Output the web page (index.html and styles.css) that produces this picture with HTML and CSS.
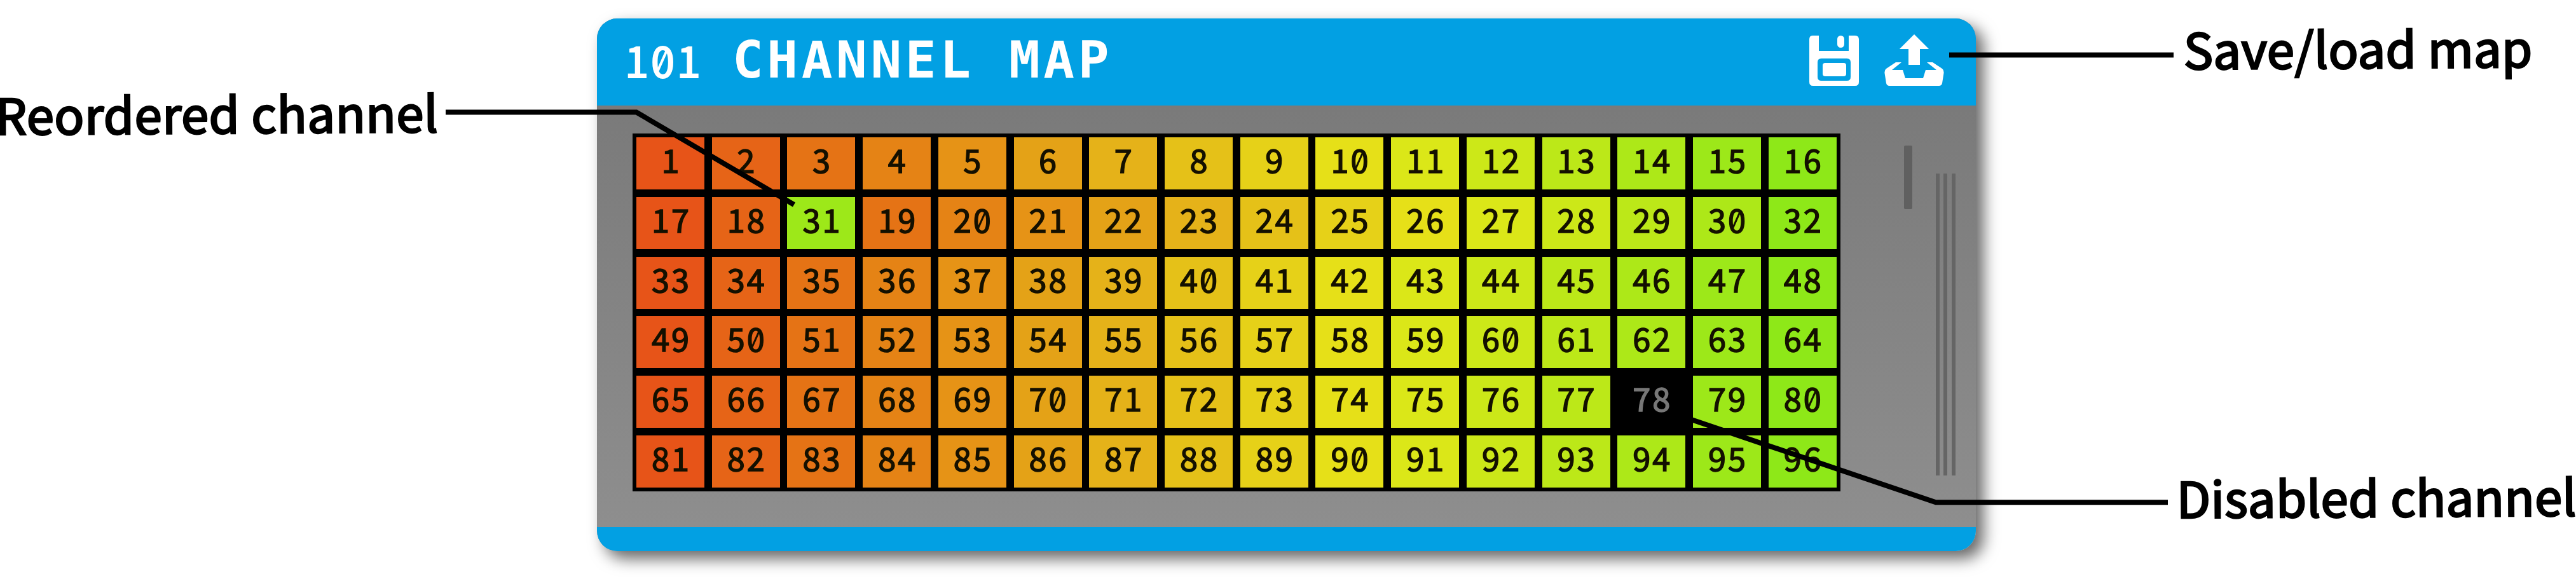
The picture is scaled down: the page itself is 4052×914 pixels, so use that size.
FILE: index.html
```html
<!DOCTYPE html>
<html lang="en">
<head>
<meta charset="utf-8">
<title>101 Channel Map</title>
<link rel="stylesheet" href="styles.css">
</head>
<body>
<main class="figure">
  <div class="notes notes-left"><p class="label label-reordered">Reordered channel</p></div>
  <section class="panel">
    <header class="panel-header">
      <span class="model">1<span class="zero">0</span>1</span>
      <h1 class="title">CHANNEL MAP</h1>
      <svg class="icon icon-save" viewBox="0 0 78 80">
        <path fill="#fff" fill-rule="evenodd" d="M5 0H15V24H62V0H72Q78 0 78 6V73Q78 79 72 79H6Q0 79 0 73V6Q0 0 5 0ZM19 36Q13 36 13 42V65Q13 71 19 71H59Q65 71 65 65V42Q65 36 59 36Z"/>
        <rect fill="#fff" x="21" y="43" width="37" height="21" rx="4"/>
        <rect fill="#fff" x="44" y="0" width="11" height="19" rx="5.5"/>
      </svg>
      <svg class="icon icon-load" viewBox="0 0 94 82">
        <path fill="#fff" d="M47 0L70 23H56V48H38V23H24ZM18 44H27L12 56H29L33 69H61L65 56H82L67 44H76L91 54Q94 56 93.500 61L91 77Q90 81 86 81H8Q4 81 3 77L.5 61Q0 56 3 54Z"/>
      </svg>
    </header>
    <div class="panel-body">
      <div class="grid" id="grid"></div>
      <div class="scroll"></div>
      <div class="grip"></div>
    </div>
    <footer class="panel-footer"></footer>
  </section>
  <div class="notes notes-right">
    <p class="label label-save">Save/load map</p>
    <p class="label label-disabled">Disabled channel</p>
  </div>
  <svg class="leaders" viewBox="0 0 4052 914">
    <path d="M701 176.500H1001L1249 322"/>
    <path d="M3066 86.500H3419"/>
    <path d="M2650 656.500L3045 790.300H3410"/>
  </svg>
</main>
<script src="grid.js"></script>
</body>
</html>
```
FILE: grid.js
```js
// Channel order: 31 is moved ahead of 19, 78 is disabled.
const order = [];
for (let n = 1; n <= 96; n++) {
  if (n === 31) continue;
  if (n === 19) order.push(31);
  order.push(n);
}
const grid = document.getElementById('grid');
for (const n of order) {
  const cell = document.createElement('div');
  cell.className = n === 78 ? 'cell disabled' : 'cell hue-' + ((n - 1) % 16 + 1);
  for (const digit of String(n)) {
    const span = document.createElement('span');
    span.className = digit === '0' ? 'zero' : 'digit';
    span.textContent = digit;
    cell.append(span);
  }
  grid.append(cell);
}
```
FILE: styles.css
```css
body { margin: 0; background: #fff; color: #000; overflow: hidden; }
p, h1 { margin: 0; }
.figure {
  position: relative;
  display: grid;
  grid-template-columns: 939px 2169px 944px;
  width: 4052px;
  height: 914px;
}
.notes { display: flex; flex-direction: column; align-items: flex-start; }
.label {
  font: 400 77.500px/100px "Noto Sans CJK SC", "Noto Sans", sans-serif;
  letter-spacing: .4px;
  -webkit-text-stroke: 2.800px #000;
  white-space: nowrap;
  transform-origin: 0 80%;
  transform: rotate(-.34deg);
}
.label-reordered { margin: 128px 0 0 -7px; letter-spacing: .65px; }
.label-save { margin: 25px 0 0 327px; }
.label-disabled { margin: 606px 0 0 316px; }
.panel {
  display: flex;
  flex-direction: column;
  height: 838px;
  margin-top: 29px;
  border-radius: 32px;
  background: linear-gradient(#7a7a7a 137px, #8e8e8e 800px);
  box-shadow: 12px 12px 24px rgba(0, 0, 0, .6);
}
.panel-header {
  display: flex;
  height: 137px;
  background: #02a0e3;
  border-radius: 32px 32px 0 0;
  color: #fff;
}
.model {
  width: 169px;
  padding-left: 44px;
  font: 400 67px/80px "Noto Sans CJK SC", sans-serif;
  letter-spacing: 3.700px;
  margin-top: 24px;
  -webkit-text-stroke: 2.200px #fff;
}
.title {
  width: 1694px;
  font: 700 81px/80px "DejaVu Sans Mono", monospace;
  letter-spacing: 5.600px;
  margin-top: 25px;
}
.icon { flex: none; display: block; }
.icon-save { width: 78px; height: 80px; margin-top: 27px; }
.icon-load { width: 94px; height: 82px; margin: 25px 0 0 40px; }
.panel-body { display: flex; height: 663px; align-items: flex-start; }
.panel-footer { height: 38px; background: #02a0e3; border-radius: 0 0 32px 32px; }
.grid {
  box-sizing: border-box;
  display: grid;
  grid-template-columns: repeat(16, 107px);
  grid-auto-rows: 82px;
  gap: 11.800px 11.730px;
  width: 1900px;
  height: 563px;
  margin: 44px 0 0 56px;
  padding: 6px;
  background: #000;
}
.cell {
  display: flex;
  justify-content: center;
  font: 400 50.500px/69px "Noto Sans CJK SC", sans-serif;
  -webkit-text-stroke: 1.500px currentColor;
  color: #141000;
}
.digit, .cell .zero { width: 31px; height: 69px; text-align: center; }
.zero { position: relative; display: inline-block; }
.zero::after {
  content: "";
  position: absolute;
  left: 50%;
  top: 50%;
  width: .065em;
  height: .62em;
  margin: -.28em 0 0 -.0325em;
  background: currentColor;
  transform: rotate(24deg);
}
.model .zero::after { margin-left: -.06em; }
.disabled { color: #777; }
.hue-1 { background: #e75418; }
.hue-2 { background: #e66417; }
.hue-3 { background: #e57315; }
.hue-4 { background: #e58315; }
.hue-5 { background: #e69316; }
.hue-6 { background: #e4a217; }
.hue-7 { background: #e5b219; }
.hue-8 { background: #e5c118; }
.hue-9 { background: #e6d118; }
.hue-10 { background: #e6e018; }
.hue-11 { background: #dbe718; }
.hue-12 { background: #cce818; }
.hue-13 { background: #bce818; }
.hue-14 { background: #ade818; }
.hue-15 { background: #9de819; }
.hue-16 { background: #8ee818; }
.scroll { width: 13px; height: 100px; margin: 63px 0 0 100px; border-radius: 2px; background: #606060; }
.grip {
  width: 31px;
  height: 475px;
  margin: 107px 0 0 37px;
  background: repeating-linear-gradient(90deg, #656565 0 6px, transparent 6px 12.500px);
}
.leaders { position: absolute; left: 0; top: 0; width: 4052px; height: 914px; }
.leaders path { fill: none; stroke: #000; stroke-width: 8px; }
```
